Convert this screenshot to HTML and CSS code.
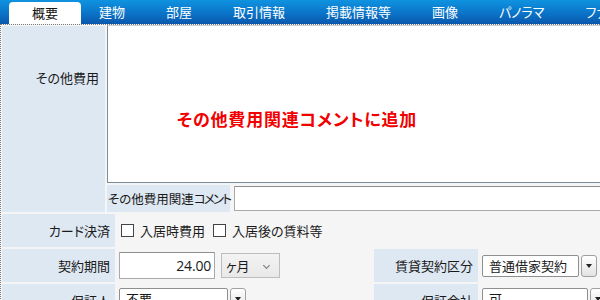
FILE: index.html
```html
<!DOCTYPE html>
<html lang="ja">
<head>
<meta charset="utf-8">
<link rel="stylesheet" href="styles.css">
</head>
<body>
<div class="page">
  <nav class="tabs">
    <div class="tab active">概要</div>
    <div class="tab">建物</div>
    <div class="tab">部屋</div>
    <div class="tab">取引情報</div>
    <div class="tab">掲載情報等</div>
    <div class="tab">画像</div>
    <div class="tab">パノラマ</div>
    <div class="tab">ファイル</div>
  </nav>
  <div class="panel">
    <div class="fee">
      <div class="label fee-label">その他費用</div>
      <div class="textarea"><span class="note">その他費用関連コメントに追加</span></div>
      <div class="comment-row">
        <div class="label comment-label">その他費用関連<span class="kana">コメント</span></div>
        <div class="input comment-input"></div>
      </div>
    </div>
    <div class="row">
      <div class="label">カード決済</div>
      <div class="checks">
        <span class="check"><span class="box"></span>入居時費用</span>
        <span class="check"><span class="box"></span>入居後の賃料等</span>
      </div>
    </div>
    <div class="form-grid">
      <div class="label">契約期間</div>
      <div class="cell">
        <div class="input num">24.00</div>
        <div class="gselect">ヶ月<span class="chev"></span></div>
      </div>
      <div class="label">賃貸契約区分</div>
      <div class="cell">
        <div class="combo">
          <div class="select w96">普通借家契約</div>
          <div class="dd"><span class="tri"></span></div>
        </div>
      </div>
      <div class="label">保証人</div>
      <div class="cell top">
        <div class="combo">
          <div class="select w109">不要</div>
          <div class="dd"><span class="tri"></span></div>
        </div>
      </div>
      <div class="label">保証会社</div>
      <div class="cell top">
        <div class="combo">
          <div class="select w106">可</div>
          <div class="dd"><span class="tri"></span></div>
        </div>
      </div>
    </div>
  </div>
</div>
</body>
</html>
```
FILE: styles.css
```css
html, body {
  margin: 0;
  padding: 0;
  overflow: hidden;
  background: #f5f5f5;
}
body {
  font-family: "Noto Sans CJK JP", "Noto Sans", sans-serif;
  font-size: 13px;
  font-feature-settings: "palt";
  color: #1a1a1a;
  width: 600px;
  height: 300px;
}
.page {
  width: 720px;
}
.tabs {
  display: flex;
  height: 24px;
  padding-left: 9px;
  background: linear-gradient(#0f93e0 0%, #0a74c8 55%, #0a58ad 100%);
}
.tab {
  padding: 0 20.5px;
  line-height: 24px;
  color: #fff;
  white-space: nowrap;
}
.tab.active {
  margin-top: 2px;
  line-height: 21px;
  height: 22px;
  padding: 0 23px;
  margin-right: -2.5px;
  background: #fff;
  color: #111;
  border-radius: 4px 4px 0 0;
}
.panel {
  border-top: 1px dotted #7a7a7a;
  border-left: 1px dotted #7a7a7a;
  padding-left: 1px;
  display: flex;
  flex-direction: column;
  gap: 2px;
  height: 400px;
}
.label {
  background: #dee8f3;
  padding-right: 5px;
  box-sizing: border-box;
  display: flex;
  align-items: center;
  justify-content: flex-end;
  white-space: nowrap;
}
.fee {
  display: grid;
  grid-template-columns: 103px 1fr;
  grid-template-rows: 158px 27px;
  column-gap: 2px;
  row-gap: 2px;
}
.fee-label {
  grid-row: 1 / 3;
  align-items: flex-start;
  padding-top: 42px;
  padding-right: 6px;
  margin-top: 1px;
}
.textarea {
  background: #fff;
  border: 1px solid #7b8c9b;
  border-top-color: #c8d0d8;
  box-sizing: border-box;
  padding: 80px 0 0 69px;
}
.note {
  color: #f20000;
  font-weight: bold;
  font-size: 17px;
  letter-spacing: 0.8px;
}
.comment-row {
  display: flex;
  align-items: center;
  gap: 4px;
}
.comment-label {
  width: 123px;
  height: 27px;
  justify-content: flex-start;
  padding: 0 0 0 1px;
  font-size: 12.5px;
}
.kana {
  letter-spacing: -1.8px;
}
.input {
  background: #fff;
  border: 1px solid #a9a9a9;
  border-top-color: #8e8e8e;
  box-sizing: border-box;
  border-radius: 1px;
}
.comment-input {
  flex: 1;
  height: 25px;
}
.row {
  display: flex;
  align-items: center;
  height: 33px;
}
.row .label {
  height: 100%;
  width: 113px;
}
.checks {
  display: flex;
  gap: 8px;
  margin-left: 6px;
}
.check {
  display: flex;
  align-items: center;
  gap: 6px;
}
.box {
  width: 13px;
  height: 13px;
  box-sizing: border-box;
  border: 1px solid #444;
  background: #fff;
}
.form-grid {
  display: grid;
  grid-template-columns: 113px 259px 104px 1fr;
  grid-auto-rows: 33px;
  row-gap: 2px;
}
.cell {
  display: flex;
  align-items: center;
  padding-left: 4px;
}
.cell.top {
  align-items: flex-start;
  padding-top: 4px;
}
.num {
  width: 96px;
  height: 27px;
  text-align: right;
  padding-right: 3px;
  line-height: 25px;
  font-size: 14px;
  font-family: "Open Sans", "Noto Sans", sans-serif;
  letter-spacing: -0.2px;
}
.gselect {
  margin-left: 6px;
  width: 59px;
  height: 25px;
  box-sizing: border-box;
  border: 1px solid #bdbdbd;
  background: linear-gradient(#f3f3f3, #e8e8e8);
  display: flex;
  align-items: center;
  padding-left: 4px;
  position: relative;
}
.chev {
  position: absolute;
  right: 10px;
  top: 9px;
  width: 4px;
  height: 4px;
  border-right: 1px solid #777;
  border-bottom: 1px solid #777;
  transform: rotate(45deg);
}
.combo {
  display: flex;
  gap: 2px;
  height: 22px;
}
.select {
  background: #fff;
  border: 1px solid #8f8f8f;
  border-radius: 2px;
  box-sizing: border-box;
  padding-left: 6px;
  line-height: 20px;
  white-space: nowrap;
}
.w96 { width: 97px; }
.w109 { width: 109px; }
.w106 { width: 106px; }
.dd {
  width: 16px;
  box-sizing: border-box;
  border: 1px solid #a0a0a0;
  border-radius: 3px;
  background: linear-gradient(#ffffff, #e2e2e2);
  display: flex;
  align-items: center;
  justify-content: center;
}
.tri {
  width: 0;
  height: 0;
  border-left: 3.5px solid transparent;
  border-right: 3.5px solid transparent;
  border-top: 4px solid #222;
}
.top .select { border-radius: 2px 2px 0 0; }
```
